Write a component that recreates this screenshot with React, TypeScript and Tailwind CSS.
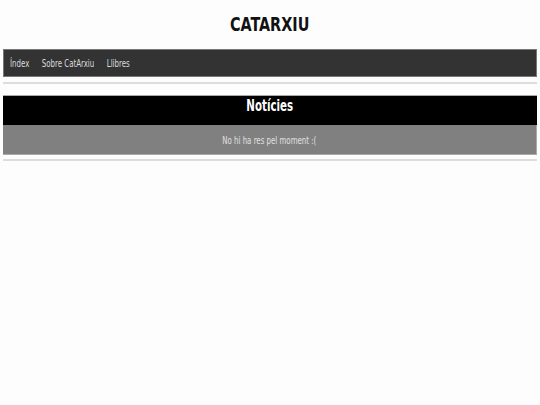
import React from "react";

export default function App() {
  return (
    <div className="min-h-[405px] w-[540px] bg-[#fdfdfd] font-['DejaVu_Sans_Condensed','DejaVu_Sans',sans-serif]">
      <header className="h-[49px] pt-[13px] text-center">
        <h1 className="inline-block text-[20px] leading-[22px] font-bold text-[#111] scale-x-[0.8]">CATARXIU</h1>
      </header>
      <nav className="mx-[3px] h-[28px] bg-[#333] border border-[#777] flex items-center pl-[6px] text-[10px] text-[#ddd]">
        <div className="flex gap-[16px] origin-left scale-x-[0.78]">
          <span>Índex</span>
          <span>Sobre CatArxiu</span>
          <span>Llibres</span>
        </div>
      </nav>
      <div className="mx-[3px] mt-[5px] h-[2px] bg-[#ddd]" />
      <section className="mx-[3px] mt-[11px]">
        <div className="h-[30px] bg-black border-t border-[#aaa] flex justify-center items-start pt-[3px]">
          <span className="block text-[15px] leading-[15px] font-bold text-white scale-x-[0.76]">Notícies</span>
        </div>
        <div className="h-[30px] bg-[#808080] border-b border-r border-[#aaa] flex items-center justify-center pt-[2px]">
          <span className="inline-block text-[10px] text-[#e0e0e0] scale-x-[0.78]">No hi ha res pel moment :(</span>
        </div>
      </section>
      <div className="mx-[3px] mt-[4px] h-[2px] bg-[#ddd]" />
    </div>
  );
}
